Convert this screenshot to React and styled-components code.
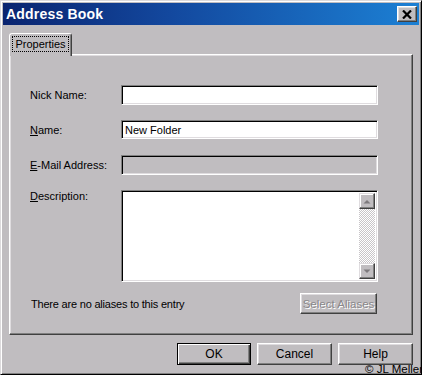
import React from 'react';
import styled, { createGlobalStyle, css } from 'styled-components';

const FACE = '#c0bdc0';

const Global = createGlobalStyle`
  html, body { margin: 0; padding: 0; background: ${FACE}; }
  body {
    width: 422px; height: 375px; overflow: hidden;
    font-family: "Liberation Sans", Arial, sans-serif;
    font-size: 11px; color: #000;
  }
`;

const Window = styled.div`
  position: relative;
  box-sizing: border-box;
  width: 422px;
  height: 375px;
  background: ${FACE};
  border-style: solid;
  border-width: 1px;
  border-color: #dcdadc #000 #000 #dcdadc;
  box-shadow: inset 1px 1px 0 #fff, inset -1px -1px 0 #808080;
  padding: 2px;
  display: flex;
  flex-direction: column;
`;

const TitleBar = styled.div`
  height: 22px;
  flex: none;
  display: flex;
  align-items: center;
  justify-content: space-between;
  padding: 0 2px 0 3px;
  background: linear-gradient(to right, #0a2470 0%, #13489e 40%, #1c80d4 100%);
`;

const Title = styled.span`
  color: #fff;
  font-weight: bold;
  font-size: 14px;
  letter-spacing: 0.2px;
`;

const CloseButton = styled.div`
  box-sizing: border-box;
  width: 20px;
  height: 16px;
  background: ${FACE};
  border: 1px solid;
  border-color: #fff #404040 #404040 #fff;
  box-shadow: inset -1px -1px 0 #808080, inset 1px 1px 0 #dfdfdf;
  display: flex;
  align-items: center;
  justify-content: center;
`;

const Body = styled.div`
  flex: 1;
  display: flex;
  flex-direction: column;
  padding: 8px 6px 0 6px;
`;

const TabStrip = styled.div`
  display: flex;
  height: 21px;
  position: relative;
  z-index: 1;
`;

const Tab = styled.div`
  box-sizing: border-box;
  width: 63px;
  height: 23px;
  background: ${FACE};
  border-style: solid;
  border-width: 1px 1px 0 1px;
  border-color: #fff #404040 transparent #fff;
  border-radius: 3px 3px 0 0;
  box-shadow: inset -1px 0 0 #808080;
  padding: 3px 2px 0 3px;
`;

const FocusLabel = styled.span`
  display: block;
  outline: 1px dotted #000;
  outline-offset: 0;
  text-align: center;
  line-height: 14px;
  margin-right: 1px;
`;

const Panel = styled.div`
  box-sizing: border-box;
  height: 281px;
  border-style: solid;
  border-width: 1px;
  border-color: #fff #404040 #404040 #fff;
  box-shadow: inset -1px -1px 0 #808080, inset 1px 1px 0 #dfdcdf;
  padding: 30px 0 0 20px;
  display: grid;
  grid-template-columns: 91px 257px;
  grid-auto-rows: min-content;
  row-gap: 15px;
`;

const Label = styled.label`
  align-self: ${p => (p.$top ? 'start' : 'center')};
  line-height: ${p => (p.$top ? '13px' : '20px')};
  u { text-decoration: underline; }
`;

const sunken = css`
  box-sizing: border-box;
  border-style: solid;
  border-width: 1px;
  border-color: #808080 #fff #fff #808080;
  box-shadow: inset 1px 1px 0 #000, inset -1px -1px 0 #dfdcdf;
`;

const Field = styled.div`
  ${sunken};
  height: ${p => (p.$short ? 19 : 20)}px;
  background: ${p => (p.$disabled ? FACE : '#fff')};
  padding: 0 3px;
  line-height: 18px;
  white-space: nowrap;
`;

const TextArea = styled.div`
  ${sunken};
  height: 92px;
  background: #fff;
  display: flex;
  justify-content: flex-end;
  padding: 2px;
`;

const ScrollBar = styled.div`
  width: 16px;
  display: flex;
  flex-direction: column;
  justify-content: space-between;
  background: repeating-conic-gradient(#c8c5c8 0 25%, #fff 0 50%) 0 0 / 2px 2px;
`;

const ScrollButton = styled.div`
  box-sizing: border-box;
  width: 16px;
  height: 16px;
  background: ${FACE};
  border: 1px solid;
  border-color: #dfdcdf #404040 #404040 #dfdcdf;
  box-shadow: inset -1px -1px 0 #808080, inset 1px 1px 0 #fff;
  display: flex;
  align-items: center;
  justify-content: center;
`;

const AliasRow = styled.div`
  grid-column: 1 / 3;
  display: flex;
  align-items: center;
  justify-content: space-between;
  margin-top: -4px;
  padding-left: 1px;
  padding-right: 1px;
`;

const AliasText = styled.span`
  letter-spacing: -0.2px;
`;

const Button = styled.div`
  box-sizing: border-box;
  width: ${p => p.$w || 75}px;
  height: ${p => p.$h || 22}px;
  background: ${FACE};
  border: 1px solid;
  border-color: #fff #404040 #404040 #fff;
  box-shadow: inset -1px -1px 0 #808080, inset 1px 1px 0 #dfdcdf;
  display: flex;
  align-items: center;
  justify-content: center;
  font-size: 12px;
  ${p => p.$default && css`
    border: 1px solid #000;
    box-shadow: inset 1px 1px 0 #fff, inset -1px -1px 0 #404040, inset -2px -2px 0 #808080;
  `}
  ${p => p.$disabled && css`
    color: #8a878a;
    text-shadow: 1px 1px 0 #fff;
    font-size: 11.5px;
  `}
`;

const ButtonRow = styled.div`
  display: flex;
  justify-content: flex-end;
  gap: 6px;
  margin-top: 8px;
`;

const Copyright = styled.span`
  position: absolute;
  right: -2px;
  bottom: -1px;
  font-size: 11.5px;
  line-height: 12px;
  color: #000;
`;

const Arrow = ({ up }) => (
  <svg width="8" height="5" viewBox="0 0 8 5">
    {up ? (
      <path d="M0.5 4.5 L4 1 L7.5 4.5 Z" fill="#7d7a7d" />
    ) : (
      <path d="M0.5 0.5 L4 4 L7.5 0.5 Z" fill="#7d7a7d" />
    )}
  </svg>
);

export default function App() {
  return (
    <>
      <Global />
      <Window>
        <TitleBar>
          <Title>Address Book</Title>
          <CloseButton>
            <svg width="10" height="9" viewBox="0 0 10 9">
              <path d="M1 0.5 L9 8.5 M9 0.5 L1 8.5" stroke="#000" strokeWidth="2.2" />
            </svg>
          </CloseButton>
        </TitleBar>
        <Body>
          <TabStrip>
            <Tab>
              <FocusLabel>Properties</FocusLabel>
            </Tab>
          </TabStrip>
          <Panel>
            <Label>Nick Name:</Label>
            <Field />
            <Label><u>N</u>ame:</Label>
            <Field $short>New Folder</Field>
            <Label><u>E</u>-Mail Address:</Label>
            <Field $disabled />
            <Label $top><u>D</u>escription:</Label>
            <TextArea>
              <ScrollBar>
                <ScrollButton><Arrow up /></ScrollButton>
                <ScrollButton><Arrow /></ScrollButton>
              </ScrollBar>
            </TextArea>
            <AliasRow>
              <AliasText>There are no aliases to this entry</AliasText>
              <Button $w={77} $h={21} $disabled>Select Aliases</Button>
            </AliasRow>
          </Panel>
          <ButtonRow>
            <Button $default $w={74}>OK</Button>
            <Button>Cancel</Button>
            <Button>Help</Button>
          </ButtonRow>
        </Body>
        <Copyright>© JL Meller</Copyright>
      </Window>
    </>
  );
}
